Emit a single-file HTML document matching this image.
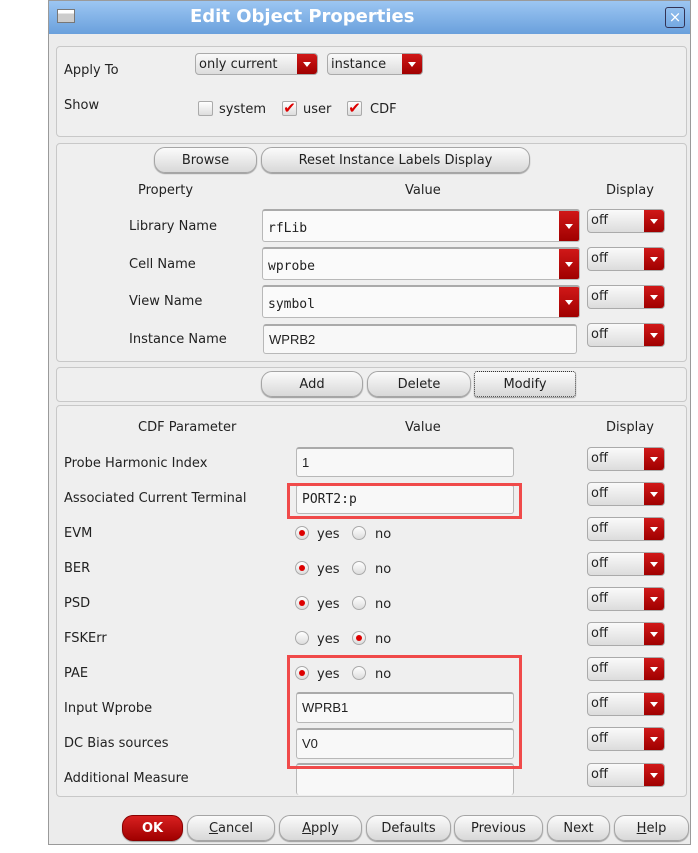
<!DOCTYPE html>
<html><head><meta charset="utf-8"><style>
*{box-sizing:border-box;margin:0;padding:0}
body{width:698px;height:853px;background:#fff;position:relative;overflow:hidden;font-family:"DejaVu Sans","Liberation Sans",sans-serif;font-size:13px;color:#222}
.a{position:absolute}
#win{left:48px;top:0;width:643px;height:845px;background:#ececec;border:1px solid #9a9a9a}
#title{left:49px;top:1px;width:641px;height:33px;background:linear-gradient(#9cc6f2,#6aa0dc);}
.panel{position:absolute;left:56px;width:631px;border:1px solid #c8c8c8;border-radius:4px;background:#efefef}
.lbl{position:absolute;font-size:13px;white-space:nowrap;margin-top:2px}
.combo{position:absolute;border:1px solid #aaa;border-radius:4px;background:linear-gradient(#fafafa,#dcdcdc);font-size:13px;padding-left:3px;line-height:22px;overflow:hidden}
.combo .r{position:absolute;right:0;top:0;bottom:0;width:20px;background:linear-gradient(#d01818,#a00000)}
.combo .r:after{content:"";position:absolute;left:6px;top:50%;margin-top:-2px;border-left:4px solid transparent;border-right:4px solid transparent;border-top:5px solid #fff}
.btn{position:absolute;height:26px;border:1px solid #a5a5a5;border-radius:11px;background:linear-gradient(#fbfbfb,#d8d8d8);text-align:center;line-height:26px;font-size:13px;box-shadow:0 1px 1px #999}
.tf{position:absolute;border:1px solid #b8b8b8;border-top:2px solid #aaa;border-radius:3px;background:#f8f8f8;font-family:"DejaVu Sans Mono","Liberation Mono",monospace;font-size:13px;padding-left:5px;line-height:28px}
.big{height:33px;background:#fafafa}
.rad{position:absolute;width:14px;height:14px;border-radius:50%;border:1px solid #aaa;background:linear-gradient(#fff,#ddd)}
.rad.on:after{content:"";position:absolute;left:3px;top:3px;width:6px;height:6px;border-radius:50%;background:#d00}
.cb{position:absolute;width:15px;height:15px;border:1px solid #aaa;border-radius:2px;background:linear-gradient(#fff,#ddd);color:#d00;font-size:15px;line-height:13px;font-weight:bold;text-align:center}
.red{position:absolute;border:3px solid #f04a4a}
</style></head><body>
<div id="win" class="a"></div>
<div id="title" class="a"></div>
<div class="a" style="left:57px;top:9px;width:18px;height:14px;border:1px solid #777;background:linear-gradient(#fff 30%,#ccc 30%)"></div>
<div class="a" style="left:190px;top:6px;font-size:18px;font-weight:bold;color:#fff">Edit Object Properties</div>
<div class="a" style="left:665px;top:7px;width:20px;height:21px;border:1px solid #335;border-radius:3px;color:#fff;text-align:center;line-height:18px;font-size:15px">×</div>

<div class="panel" style="top:46px;height:91px"></div>
<div class="lbl" style="left:64px;top:61px">Apply To</div>
<div class="combo" style="left:195px;top:53px;width:123px;height:22px">only current<div class="r"></div></div>
<div class="combo" style="left:327px;top:53px;width:96px;height:22px">instance<div class="r"></div></div>
<div class="lbl" style="left:64px;top:96px">Show</div>
<div class="cb" style="left:198px;top:101px"></div><div class="lbl" style="left:219px;top:100px">system</div>
<div class="cb" style="left:282px;top:101px">✔</div><div class="lbl" style="left:303px;top:100px">user</div>
<div class="cb" style="left:347px;top:101px">✔</div><div class="lbl" style="left:370px;top:100px">CDF</div>

<div class="panel" style="top:143px;height:219px"></div>
<div class="btn" style="left:154px;top:147px;width:103px">Browse</div>
<div class="btn" style="left:261px;top:147px;width:269px">Reset Instance Labels Display</div>
<div class="lbl" style="left:138px;top:181px">Property</div>
<div class="lbl" style="left:405px;top:181px">Value</div>
<div class="lbl" style="left:606px;top:181px">Display</div>

<div class="lbl" style="left:129px;top:217px">Library Name</div>
<div class="combo big tf" style="left:262px;top:209px;width:318px;height:33px;line-height:35px">rfLib<div class="r"></div></div>
<div class="lbl" style="left:129px;top:255px">Cell Name</div>
<div class="combo big tf" style="left:262px;top:247px;width:318px;height:33px;line-height:35px">wprobe<div class="r"></div></div>
<div class="lbl" style="left:129px;top:292px">View Name</div>
<div class="combo big tf" style="left:262px;top:285px;width:318px;height:33px;line-height:35px">symbol<div class="r"></div></div>
<div class="lbl" style="left:129px;top:330px">Instance Name</div>
<div class="tf" style="left:263px;top:324px;width:314px;height:30px;font-family:'Liberation Sans',sans-serif">WPRB2</div>
<div class="combo" style="left:587px;top:209px;width:78px;height:24px">off<div class="r"></div></div>
<div class="combo" style="left:587px;top:247px;width:78px;height:24px">off<div class="r"></div></div>
<div class="combo" style="left:587px;top:285px;width:78px;height:24px">off<div class="r"></div></div>
<div class="combo" style="left:587px;top:323px;width:78px;height:24px">off<div class="r"></div></div>

<div class="panel" style="top:367px;height:35px"></div>
<div class="btn" style="left:261px;top:371px;width:102px">Add</div>
<div class="btn" style="left:367px;top:371px;width:104px">Delete</div>
<div class="btn" style="left:474px;top:371px;width:102px;border:1px dotted #333;border-radius:3px">Modify</div>

<div class="panel" style="top:405px;height:392px"></div>
<div class="lbl" style="left:138px;top:418px">CDF Parameter</div>
<div class="lbl" style="left:405px;top:418px">Value</div>
<div class="lbl" style="left:606px;top:418px">Display</div>

<div class="lbl" style="left:64px;top:454px">Probe Harmonic Index</div>
<div class="tf" style="left:296px;top:447px;width:218px;height:30px;font-family:'Liberation Sans',sans-serif">1</div>
<div class="lbl" style="left:64px;top:489px">Associated Current Terminal</div>
<div class="tf" style="left:296px;top:484px;width:218px;height:30px">PORT2:p</div>
<div class="lbl" style="left:64px;top:524px">EVM</div>
<div class="lbl" style="left:64px;top:559px">BER</div>
<div class="lbl" style="left:64px;top:594px">PSD</div>
<div class="lbl" style="left:64px;top:629px">FSKErr</div>
<div class="lbl" style="left:64px;top:664px">PAE</div>
<div class="lbl" style="left:64px;top:699px">Input Wprobe</div>
<div class="tf" style="left:296px;top:692px;width:218px;height:31px;font-family:'Liberation Sans',sans-serif">WPRB1</div>
<div class="lbl" style="left:64px;top:734px">DC Bias sources</div>
<div class="tf" style="left:296px;top:728px;width:218px;height:31px;font-family:'Liberation Sans',sans-serif">V0</div>
<div class="lbl" style="left:64px;top:769px">Additional Measure</div>
<div class="tf" style="left:296px;top:763px;width:218px;height:32px;border-bottom:none"></div>

<div class="rad on" style="left:295px;top:526px"></div><div class="lbl" style="left:317px;top:525px">yes</div><div class="rad" style="left:352px;top:526px"></div><div class="lbl" style="left:375px;top:525px">no</div>
<div class="rad on" style="left:295px;top:561px"></div><div class="lbl" style="left:317px;top:560px">yes</div><div class="rad" style="left:352px;top:561px"></div><div class="lbl" style="left:375px;top:560px">no</div>
<div class="rad on" style="left:295px;top:596px"></div><div class="lbl" style="left:317px;top:595px">yes</div><div class="rad" style="left:352px;top:596px"></div><div class="lbl" style="left:375px;top:595px">no</div>
<div class="rad" style="left:295px;top:631px"></div><div class="lbl" style="left:317px;top:630px">yes</div><div class="rad on" style="left:352px;top:631px"></div><div class="lbl" style="left:375px;top:630px">no</div>
<div class="rad on" style="left:295px;top:666px"></div><div class="lbl" style="left:317px;top:665px">yes</div><div class="rad" style="left:352px;top:666px"></div><div class="lbl" style="left:375px;top:665px">no</div>

<div class="combo" style="left:587px;top:447px;width:78px;height:24px">off<div class="r"></div></div>
<div class="combo" style="left:587px;top:482px;width:78px;height:24px">off<div class="r"></div></div>
<div class="combo" style="left:587px;top:517px;width:78px;height:24px">off<div class="r"></div></div>
<div class="combo" style="left:587px;top:552px;width:78px;height:24px">off<div class="r"></div></div>
<div class="combo" style="left:587px;top:587px;width:78px;height:24px">off<div class="r"></div></div>
<div class="combo" style="left:587px;top:622px;width:78px;height:24px">off<div class="r"></div></div>
<div class="combo" style="left:587px;top:657px;width:78px;height:24px">off<div class="r"></div></div>
<div class="combo" style="left:587px;top:692px;width:78px;height:24px">off<div class="r"></div></div>
<div class="combo" style="left:587px;top:727px;width:78px;height:24px">off<div class="r"></div></div>
<div class="combo" style="left:587px;top:763px;width:78px;height:24px">off<div class="r"></div></div>

<div class="red" style="left:287px;top:483px;width:235px;height:36px"></div>
<div class="red" style="left:287px;top:655px;width:235px;height:114px"></div>

<div class="btn" style="left:122px;top:815px;width:61px;background:linear-gradient(#d82020,#a00000);color:#fff;font-weight:bold;border-color:#800">OK</div>
<div class="btn" style="left:187px;top:815px;width:88px"><u>C</u>ancel</div>
<div class="btn" style="left:279px;top:815px;width:83px"><u>A</u>pply</div>
<div class="btn" style="left:366px;top:815px;width:85px">Defaults</div>
<div class="btn" style="left:454px;top:815px;width:89px">Previous</div>
<div class="btn" style="left:547px;top:815px;width:63px">Next</div>
<div class="btn" style="left:614px;top:815px;width:75px"><u>H</u>elp</div>
</body></html>
